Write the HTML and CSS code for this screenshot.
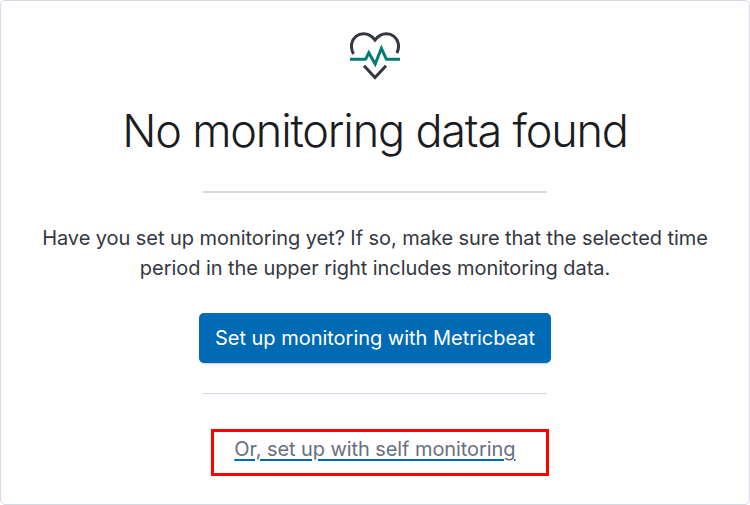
FILE: index.html
```
<!DOCTYPE html>
<html lang="en">
<head>
<meta charset="utf-8">
<title>Monitoring</title>
<link rel="stylesheet" href="styles.css">
</head>
<body>
<main class="panel">
  <svg class="icon" viewBox="0 0 50 48" fill="none" stroke-width="3">
    <path stroke="#343741" d="M3.500 22C1.600 18.500 1.200 14.500 1.700 11.500C3 5.500 8 1.800 13.500 1.800C18 1.800 22 4 25 8C28 4 32 1.800 36.500 1.800C42 1.800 47 5.500 48.300 11.500C48.800 14.500 48.600 17.500 47 21.200M14 33.800 25 45.500 36 33.800"/>
    <path stroke="#017d73" d="M0 27.300h15.600l3.200-6.500 6.400 11.200 6.200-15.700 5 11H50"/>
  </svg>
  <h1 class="title">No monitoring data found</h1>
  <hr class="rule rule-strong">
  <p class="text">Have you set up monitoring yet? If so, make sure that the selected time<br>period in the upper right includes monitoring data.</p>
  <button class="button">Set up monitoring with Metricbeat</button>
  <hr class="rule">
  <div class="highlight"><a class="link">Or, set up with self monitoring</a></div>
</main>
</body>
</html>
```
FILE: styles.css
```
* { box-sizing: border-box; }
body { margin: 0; background: #fff; font-family: Inter, sans-serif; color: #343741; }
.panel { width: 750px; height: 505px; border: 1px solid #d3dae6; border-radius: 5px; display: flex; flex-direction: column; align-items: center; padding-top: 31px; }
.icon { width: 50px; height: 48px; flex: none; }
.title { margin: 21px 0 0; font-size: 45px; line-height: 60px; font-weight: 300; letter-spacing: -1.17px; color: #1a1c21; white-space: nowrap; }
.rule { width: 344px; height: 1px; margin: 30px 0 0; border: 0; background: #d3dae6; flex: none; }
.rule-strong { height: 2px; }
.text { margin: 30px 0 0; font-size: 20px; line-height: 30px; text-align: center; letter-spacing: -0.06px; white-space: nowrap; }
.button { margin-top: 30px; width: 352px; height: 50px; padding: 0; border: 0; border-radius: 5px; background: #006bb4; box-shadow: 0 2px 2px -1px rgba(54, 97, 126, 0.3); color: #fff; font: 400 20px/50px Inter, sans-serif; letter-spacing: -0.02px; white-space: nowrap; flex: none; }
.highlight { margin-top: 35px; margin-left: 10px; width: 338px; height: 47px; border: 3px solid #f00; flex: none; padding: 2px 0 0 20.3px; }
.link { font-size: 20px; line-height: 30px; letter-spacing: -0.08px; color: #69707d; text-decoration: underline #006bb4 2px; text-underline-offset: 3px; white-space: nowrap; }
```
